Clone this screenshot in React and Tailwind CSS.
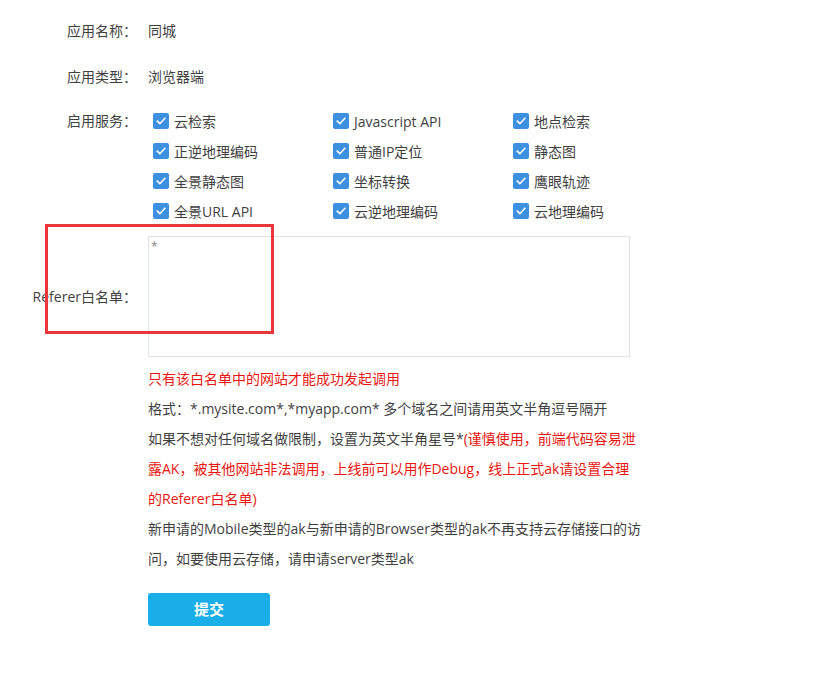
import React from "react";

const Check = ({ label }) => (
  <div className="flex items-center h-[30px] w-[180px]">
    <span className="ml-[5px] w-[16px] h-[16px] rounded-[2px] bg-[#3d8fe0] flex items-center justify-center">
      <svg width="12" height="12" viewBox="0 0 12 12" fill="none">
        <path d="M2.3 6.2 L4.9 8.7 L9.8 3.4" stroke="white" strokeWidth="1.6" strokeLinecap="square" />
      </svg>
    </span>
    <span className="ml-[5px]">{label}</span>
  </div>
);

const services = [
  ["云检索", "Javascript API", "地点检索"],
  ["正逆地理编码", "普通IP定位", "静态图"],
  ["全景静态图", "坐标转换", "鹰眼轨迹"],
  ["全景URL API", "云逆地理编码", "云地理编码"],
];

export default function App() {
  return (
    <div
      className="relative w-[840px] h-[674px] bg-white text-[14px] text-[#3f3f3f]"
      style={{ fontFamily: '"Open Sans", "Noto Sans CJK SC", sans-serif' }}
    >
      <div className="pt-[15px]">
        <div className="flex h-[30px] items-center">
          <div className="w-[137px] text-right">应用名称：</div>
          <div className="ml-[11px]">同城</div>
        </div>
        <div className="flex h-[30px] items-center mt-[16px]">
          <div className="w-[137px] text-right">应用类型：</div>
          <div className="ml-[11px]">浏览器端</div>
        </div>
        <div className="flex mt-[15px]">
          <div className="w-[137px] text-right h-[30px] leading-[30px]">启用服务：</div>
          <div className="ml-[11px] flex flex-col">
            {services.map((row, i) => (
              <div key={i} className="flex">
                {row.map((s) => (
                  <Check key={s} label={s} />
                ))}
              </div>
            ))}
          </div>
        </div>
        <div className="flex items-center mt-[10px]">
          <div className="w-[137px] text-right">Referer白名单：</div>
          <div className="ml-[11px] w-[482px] h-[121px] border border-[#e2e2e2] border-l-[#dfe3ef] px-[2px] text-[12px] leading-[20px] text-[#888]">
            *
          </div>
        </div>
        <div className="ml-[148px] mt-[7px] leading-[30px] whitespace-nowrap">
          <div className="text-[#e8160f]">只有该白名单中的网站才能成功发起调用</div>
          <div>格式：*.mysite.com*,*myapp.com* 多个域名之间请用英文半角逗号隔开</div>
          <div>
            如果不想对任何域名做限制，设置为英文半角星号*
            <span className="text-[#e8160f]">(谨慎使用，前端代码容易泄</span>
          </div>
          <div className="text-[#e8160f]">露AK，被其他网站非法调用，上线前可以用作Debug，线上正式ak请设置合理</div>
          <div className="text-[#e8160f]">的Referer白名单)</div>
          <div>新申请的Mobile类型的ak与新申请的Browser类型的ak不再支持云存储接口的访</div>
          <div>问，如要使用云存储，请申请server类型ak</div>
        </div>
        <div className="ml-[148px] mt-[19px]">
          <button className="w-[122px] h-[33px] rounded-[3px] bg-[#1aaee8] text-white text-[15px] font-semibold">
            提交
          </button>
        </div>
      </div>
      <div className="absolute left-[45px] top-[224px] w-[229px] h-[110px] border-[3px] border-[#e8363a]" />
    </div>
  );
}
